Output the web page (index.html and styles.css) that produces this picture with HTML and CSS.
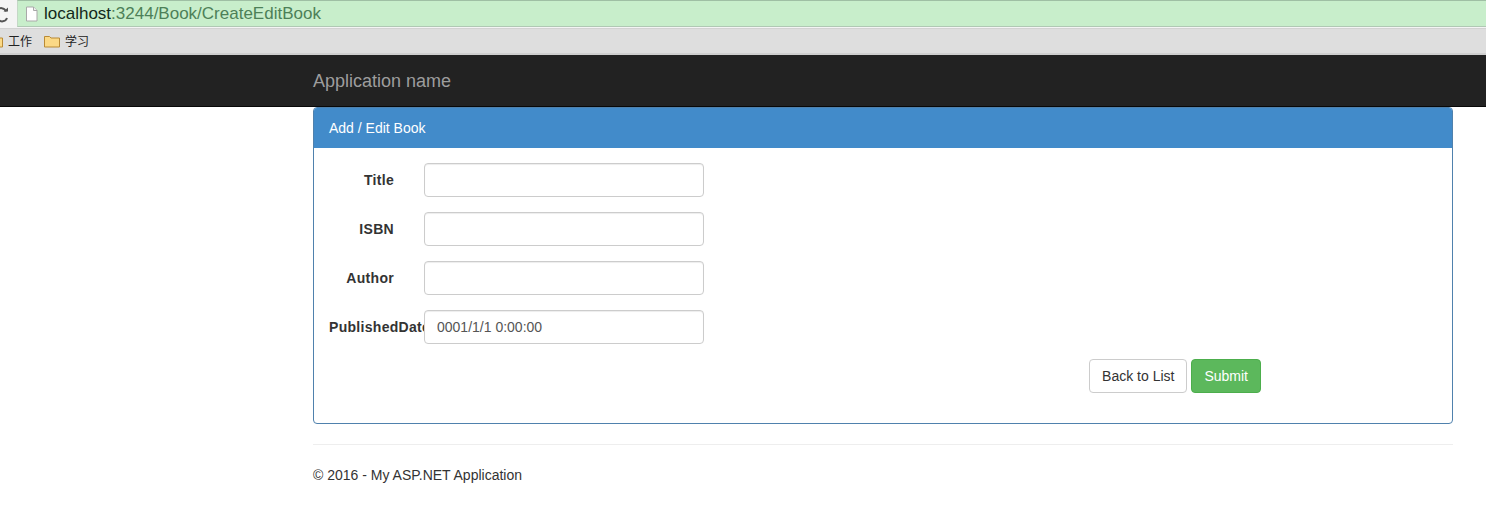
FILE: index.html
```html
<!DOCTYPE html>
<html lang="en">
<head>
<meta charset="utf-8">
<title>Add / Edit Book</title>
<link rel="stylesheet" href="styles.css">
</head>
<body>
<header class="browser">
  <div class="toolbar">
    <svg class="reload" width="8" height="20" viewBox="0 0 8 20"><path d="M-3 6.5a5 5 0 0 1 9 1M7 14a5 5 0 0 1-9 1" fill="none" stroke="#555" stroke-width="2"/><path d="M3.500 7.500h4.500v-4z" fill="#555"/></svg>
    <div class="address">
      <svg class="page-icon" width="13" height="16" viewBox="0 0 13 16"><path d="M1.500 1h7l3.500 3.500v10.500h-10.500z" fill="#fff" stroke="#a9a9a9"/><path d="M8.500 1v3.500h3.500" fill="#eee" stroke="#a9a9a9"/></svg>
      <span class="host">localhost</span><span class="path">:3244/Book/CreateEditBook</span>
    </div>
  </div>
  <nav class="bookmarks">
    <svg class="folder folder-cut" width="16" height="14" viewBox="0 0 16 14"><path d="M.5 2.500h5l1.500 1.500h8.500v9h-15z" fill="#fbd986" stroke="#b98a35"/></svg>
    <span class="bookmark">工作</span>
    <svg class="folder" width="16" height="14" viewBox="0 0 16 14"><path d="M.5 2.500h5l1.500 1.500h8.500v9h-15z" fill="#fbd986" stroke="#b98a35"/></svg>
    <span class="bookmark">学习</span>
  </nav>
</header>
<div class="navbar"><div class="container"><a class="brand">Application name</a></div></div>
<main class="container">
  <section class="panel">
    <h1 class="panel-heading">Add / Edit Book</h1>
    <form class="panel-body">
      <div class="group"><label class="label">Title</label><input class="input" type="text"></div>
      <div class="group"><label class="label">ISBN</label><input class="input" type="text"></div>
      <div class="group"><label class="label">Author</label><input class="input" type="text"></div>
      <div class="group"><label class="label">PublishedDate</label><input class="input" type="text" value="0001/1/1 0:00:00"></div>
      <div class="actions"><a class="btn btn-default">Back to List</a><button class="btn btn-success" type="button">Submit</button></div>
    </form>
  </section>
  <hr class="rule">
  <footer class="footer">© 2016 - My ASP.NET Application</footer>
</main>
</body>
</html>
```
FILE: styles.css
```css
* { box-sizing: border-box; }
html, body { margin: 0; padding: 0; }
body { background: #fff; color: #333; font: 14px/20px "Liberation Sans", Arial, sans-serif; overflow: hidden; }

.browser { height: 55px; }
.toolbar { height: 28px; display: flex; background: #f4f4f4; padding-left: 0; }
.reload { margin: 4px 9px 0 0; flex: none; }
.address { flex: 1; height: 27px; display: flex; align-items: center; background: #c8eecb; border-top: 1px solid #9fbfa4; border-bottom: 1px solid #b0c8b4; border-left: 1px solid #c4d8c6; padding-left: 7px; font: 17px/25px "Liberation Sans", Arial, sans-serif; }
.page-icon { margin-right: 6px; flex: none; }
.host { color: #12281a; }
.path { color: #4d8058; }
.bookmarks { height: 27px; display: flex; align-items: center; background: #dedede; border-top: 1px solid #d2d2d2; border-bottom: 2px solid #cfcfcf; font: 12px/16px "Noto Sans CJK SC", "Liberation Sans", sans-serif; color: #222; }
.folder { flex: none; margin-left: 12px; margin-right: 5px; }
.folder-cut { margin-left: -13px; }
.bookmark { white-space: nowrap; }

.navbar { height: 52px; background: #222; border-bottom: 1px solid #080808; }
.container { width: 1140px; margin-left: 313px; }
.brand { display: block; color: #9d9d9d; font-size: 18px; line-height: 20px; padding: 16px 0 15px; }

.panel { height: 317px; background: #fff; border: 1px solid #428bca; border-color: #4f81ad; border-radius: 4px; }
.panel-heading { margin: 0; height: 40px; padding: 10px 15px; background: #428bca; color: #fff; font-size: 14px; font-weight: 400; line-height: 20px; border-radius: 3px 3px 0 0; }
.panel-body { padding: 15px; }
.group { display: flex; align-items: center; margin-bottom: 15px; }
.label { flex: none; width: 65px; margin-right: 30px; text-align: right; white-space: nowrap; font-weight: 700; letter-spacing: .3px; }
.input { flex: none; width: 280px; height: 34px; padding: 6px 12px; border: 1px solid #ccc; border-radius: 4px; background: #fff; color: #555; font: 14px/20px "Liberation Sans", Arial, sans-serif; box-shadow: inset 0 1px 1px rgba(0,0,0,.075); }
.actions { display: flex; justify-content: flex-end; gap: 4px; padding-right: 176px; }
.btn { display: block; height: 34px; padding: 6px 12px; border: 1px solid transparent; border-radius: 4px; font: 14px/20px "Liberation Sans", Arial, sans-serif; }
.btn-default { background: #fff; border-color: #ccc; color: #333; }
.btn-success { background: #5cb85c; border-color: #4cae4c; color: #fff; }

.rule { margin: 20px 0 0; height: 1px; border: 0; background: #eee; }
.footer { margin-top: 20px; line-height: 20px; }
```
